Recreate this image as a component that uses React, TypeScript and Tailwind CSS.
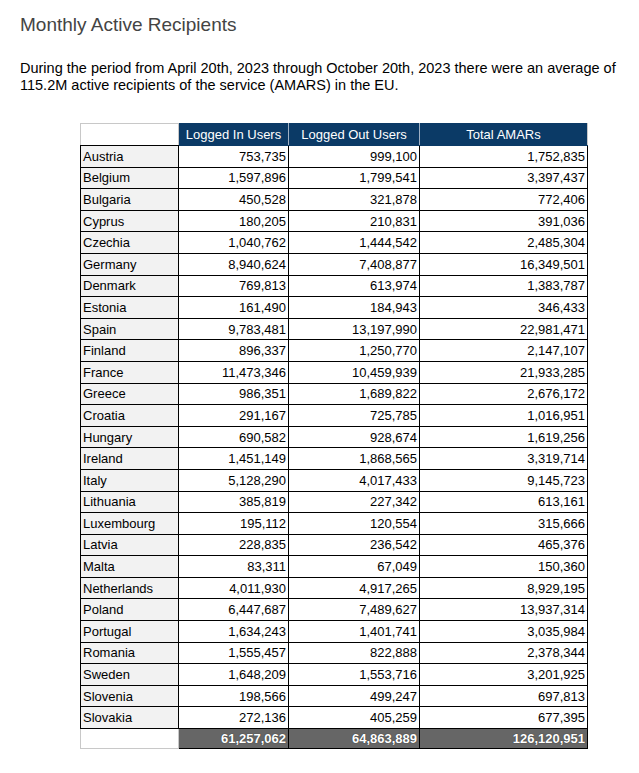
import React from "react";

const rows: [string, string, string, string][] = [
  ["Austria", "753,735", "999,100", "1,752,835"],
  ["Belgium", "1,597,896", "1,799,541", "3,397,437"],
  ["Bulgaria", "450,528", "321,878", "772,406"],
  ["Cyprus", "180,205", "210,831", "391,036"],
  ["Czechia", "1,040,762", "1,444,542", "2,485,304"],
  ["Germany", "8,940,624", "7,408,877", "16,349,501"],
  ["Denmark", "769,813", "613,974", "1,383,787"],
  ["Estonia", "161,490", "184,943", "346,433"],
  ["Spain", "9,783,481", "13,197,990", "22,981,471"],
  ["Finland", "896,337", "1,250,770", "2,147,107"],
  ["France", "11,473,346", "10,459,939", "21,933,285"],
  ["Greece", "986,351", "1,689,822", "2,676,172"],
  ["Croatia", "291,167", "725,785", "1,016,951"],
  ["Hungary", "690,582", "928,674", "1,619,256"],
  ["Ireland", "1,451,149", "1,868,565", "3,319,714"],
  ["Italy", "5,128,290", "4,017,433", "9,145,723"],
  ["Lithuania", "385,819", "227,342", "613,161"],
  ["Luxembourg", "195,112", "120,554", "315,666"],
  ["Latvia", "228,835", "236,542", "465,376"],
  ["Malta", "83,311", "67,049", "150,360"],
  ["Netherlands", "4,011,930", "4,917,265", "8,929,195"],
  ["Poland", "6,447,687", "7,489,627", "13,937,314"],
  ["Portugal", "1,634,243", "1,401,741", "3,035,984"],
  ["Romania", "1,555,457", "822,888", "2,378,344"],
  ["Sweden", "1,648,209", "1,553,716", "3,201,925"],
  ["Slovenia", "198,566", "499,247", "697,813"],
  ["Slovakia", "272,136", "405,259", "677,395"],
];

export default function App() {
  return (
    <div
      className="bg-white min-h-[773px] px-[20px] pt-[11px]"
      style={{ fontFamily: '"Liberation Sans", Arial, sans-serif' }}
    >
      <h1 className="text-[19px] leading-[27px] text-[#444444]">Monthly Active Recipients</h1>
      <p className="mt-[22px] text-[14.5px] leading-[17px] text-black">
        During the period from April 20th, 2023 through October 20th, 2023 there were an average of
        115.2M active recipients of the service (AMARS) in the EU.
      </p>
      <table className="mt-[29px] ml-[60px] border-collapse text-[13px] leading-[15px] table-fixed w-[507px]">
        <colgroup>
          <col className="w-[98px]" />
          <col className="w-[110px]" />
          <col className="w-[131px]" />
          <col className="w-[168px]" />
        </colgroup>
        <thead>
          <tr className="h-[22px]">
            <th className="border border-[#c8c8c8] border-b-black bg-white"></th>
            <th className="border border-[#0b3a66] border-r-[#9fb0c4] bg-[#0b3a66] text-white font-normal text-center">
              Logged In Users
            </th>
            <th className="border border-[#0b3a66] border-r-[#9fb0c4] bg-[#0b3a66] text-white font-normal text-center">
              Logged Out Users
            </th>
            <th className="border border-[#0b3a66] border-r-[#c8c8c8] bg-[#0b3a66] text-white font-normal text-center">
              Total AMARs
            </th>
          </tr>
        </thead>
        <tbody>
          {rows.map((r) => (
            <tr key={r[0]} className="h-[21.6px]">
              <td className="border border-black bg-[#f2f2f2] px-[2px] text-left text-black">{r[0]}</td>
              <td className="border border-black px-[2px] text-right text-black">{r[1]}</td>
              <td className="border border-black px-[2px] text-right text-black">{r[2]}</td>
              <td className="border border-black px-[2px] text-right text-black">{r[3]}</td>
            </tr>
          ))}
          <tr className="h-[20px]">
            <td className="border border-[#c8c8c8] border-t-black bg-white"></td>
            <td className="border border-black bg-[#666666] px-[2px] text-right text-white font-bold [text-shadow:0_0_1px_#222]">
              61,257,062
            </td>
            <td className="border border-black bg-[#666666] px-[2px] text-right text-white font-bold [text-shadow:0_0_1px_#222]">
              64,863,889
            </td>
            <td className="border border-black bg-[#666666] px-[2px] text-right text-white font-bold [text-shadow:0_0_1px_#222]">
              126,120,951
            </td>
          </tr>
        </tbody>
      </table>
    </div>
  );
}
